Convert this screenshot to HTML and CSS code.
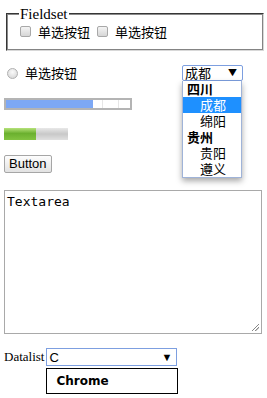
FILE: index.html
```html
<!DOCTYPE html>
<html lang="zh">
<head>
  <meta charset="UTF-8">
  <title>Form controls</title>
  <link rel="stylesheet" href="styles.css">
</head>
<body>
  <fieldset class="group">
    <legend class="group-title"><span class="legend-text">Fieldset</span></legend>
    <div class="opts">
      <span class="opt"><span class="check"></span>单选按钮</span>
      <span class="opt"><span class="check"></span>单选按钮</span>
    </div>
  </fieldset>

  <div class="row-top">
    <span class="opt radio-opt"><span class="radio"></span>单选按钮</span>
    <div class="select-box">
      <div class="select">成都<span class="arrow">▼</span></div>
      <div class="select-list">
        <div class="grp">四川</div>
        <div class="item selected">成都</div>
        <div class="item">绵阳</div>
        <div class="grp">贵州</div>
        <div class="item">贵阳</div>
        <div class="item">遵义</div>
      </div>
    </div>
  </div>

  <div class="progress"><div class="progress-fill"></div><span class="tick t1"></span><span class="tick t2"></span></div>
  <div class="meter"><div class="meter-fill"></div></div>
  <div class="btn">Button</div>

  <div class="textarea">Textarea<span class="grip"></span></div>

  <div class="datalist-row">
    <span class="dl-label">Datalist</span>
    <div class="dl-box">
      <div class="dl-input">C<span class="arrow">▼</span></div>
      <div class="dl-popup">Chrome</div>
    </div>
  </div>
</body>
</html>
```

FILE: styles.css
```css
body {
  margin: 0;
  padding: 4px;
  font-family: "Noto Sans CJK SC", sans-serif;
  font-size: 13px;
  line-height: 16px;
  color: #000;
  background: #fff;
}
.group {
  margin: 3px 0 0 2px;
  width: 230px;
  padding: 1px 12px 8px 12px;
  border: 2px groove #c0c0c0;
  border-color: #8a8a8a #d8d8d8 #d8d8d8 #8a8a8a;
}
.group-title {
  padding: 0 1px;
  margin-left: -1px;
  line-height: 14px;
}
.legend-text {
  font-family: "Liberation Serif", "Times New Roman", serif;
  font-size: 15px;
  line-height: 14px;
}
.opts {
  display: flex;
  gap: 7px;
  height: 19px;
  align-items: center;
}
.opt {
  display: inline-flex;
  align-items: center;
}
.check {
  width: 9px;
  height: 9px;
  border: 1px solid #a8a8a8;
  border-radius: 2px;
  background: linear-gradient(#f4f4f4, #d6d6d6);
  margin-right: 7px;
}
.row-top {
  display: flex;
  justify-content: space-between;
  align-items: center;
  margin-top: 14px;
  height: 16px;
}
.radio-opt {
  margin-left: 3px;
}
.radio {
  width: 9px;
  height: 9px;
  border: 1px solid #b0b0b0;
  border-radius: 50%;
  background: radial-gradient(circle at 50% 35%, #fafafa, #d2d2d2);
  margin-right: 7px;
}
.select-box {
  position: relative;
  width: 61px;
  margin-right: 20px;
}
.select {
  height: 14px;
  border: 1px solid #7d9fe0;
  border-radius: 2px;
  padding: 0 0 0 2px;
  line-height: 14px;
  font-size: 13px;
  display: flex;
  justify-content: space-between;
  background: #fff;
}
.arrow {
  font-size: 9px;
  margin-right: 5px;
}
.select-list {
  position: absolute;
  top: 16px;
  left: 0;
  width: 58px;
  border: 1px solid #9fb3d8;
  border-top: none;
  background: #fff;
  box-shadow: 0 3px 6px rgba(0, 0, 0, 0.35);
  font-size: 13px;
  line-height: 16px;
}
.grp {
  font-weight: bold;
  padding-left: 4px;
}
.item {
  padding-left: 17px;
}
.selected {
  background: #1e90ff;
  color: #fff;
}
.progress {
  position: relative;
  margin-top: 17px;
  width: 124px;
  height: 8px;
  border: 2px solid #b4b4b4;
  background: #fff;
}
.progress-fill {
  width: 87px;
  height: 100%;
  background: #7da8f5;
}
.tick {
  position: absolute;
  top: 0;
  width: 1px;
  height: 100%;
  background: #e6e6e6;
}
.t1 { left: 96px; }
.t2 { left: 112px; }
.meter {
  margin-top: 18px;
  width: 64px;
  height: 12px;
  background: linear-gradient(#e8e8e8, #c8c8c8 50%, #e0e0e0);
}
.meter-fill {
  width: 32px;
  height: 100%;
  background: linear-gradient(#b6e27a, #6bb02f 45%, #82c340);
}
.btn {
  margin-top: 15px;
  width: fit-content;
  padding: 0 4px;
  height: 16px;
  line-height: 16px;
  border: 1px solid #a6a6a6;
  border-radius: 2px;
  background: linear-gradient(#fdfdfd, #e2e2e2);
  font-family: "Liberation Sans", Arial, sans-serif;
  font-size: 13px;
}
.textarea {
  position: relative;
  margin-top: 17px;
  width: 252px;
  height: 137px;
  border: 1px solid #a9a9a9;
  padding: 3px 2px 2px 2px;
  font-family: "DejaVu Sans Mono", monospace;
  font-size: 13px;
  line-height: 15px;
}
.grip {
  position: absolute;
  right: 2px;
  bottom: 2px;
  width: 7px;
  height: 7px;
  background: linear-gradient(135deg, transparent 45%, #888 46%, #888 52%, transparent 53%, transparent 70%, #888 71%, #888 78%, transparent 79%);
}
.datalist-row {
  display: flex;
  align-items: flex-start;
  margin-top: 14px;
}
.dl-label {
  font-family: "Liberation Serif", serif;
  font-size: 13px;
  line-height: 18px;
  margin-right: 2px;
}
.dl-box {
  display: flex;
  flex-direction: column;
  gap: 2px;
}
.dl-input {
  width: 127px;
  height: 16px;
  border: 1px solid #7d9fe0;
  padding: 0 0 0 2px;
  font-family: "Liberation Sans", Arial, sans-serif;
  font-size: 13px;
  line-height: 17px;
  display: flex;
  justify-content: space-between;
}
.dl-input .arrow {
  font-size: 11px;
  margin-right: 4px;
}
.dl-popup {
  width: 121px;
  height: 24px;
  padding-left: 9px;
  border: 1px solid #000;
  background: #fff;
  font-family: "DejaVu Sans", sans-serif;
  font-weight: bold;
  font-size: 12px;
  line-height: 24px;
}
```
